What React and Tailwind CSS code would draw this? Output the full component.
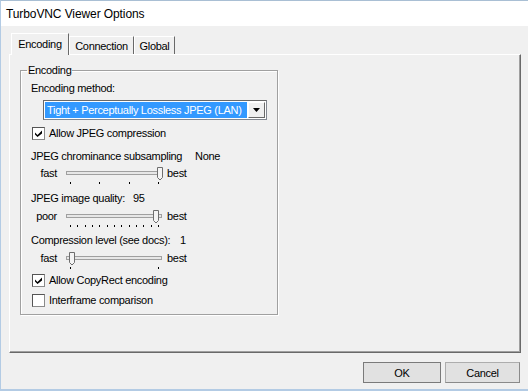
import React from 'react';

function CheckBox({ checked }) {
  return (
    <span className="w-[13px] h-[13px] shrink-0 bg-white border border-[#8a8a8a] border-t-[#555] border-l-[#555] flex items-center justify-center">
      {checked && (
        <svg width="7" height="7" viewBox="0 0 7 7">
          <polygon points="0,2.5 2.5,5 7,0.5 7,3.5 2.5,7 0,4.5" fill="#000" />
        </svg>
      )}
    </span>
  );
}

function Slider({ thumb, ticks }) {
  return (
    <svg width="104" height="20" className="block">
      <rect x="6.5" y="6.5" width="95" height="3" fill="#e7e7e7" stroke="#a0a0a0" />
      <polygon
        points={`${thumb + 0.5},2.5 ${thumb + 5.5},2.5 ${thumb + 5.5},12.5 ${thumb + 3},15 ${thumb + 0.5},12.5`}
        fill="#f4f4f4"
        stroke="#6e6e6e"
      />
      {ticks.map((t) => (
        <line key={t} x1={t + 0.5} x2={t + 0.5} y1="17" y2="19" stroke="#000" />
      ))}
    </svg>
  );
}

function SliderRow({ left, thumb, ticks, className }) {
  return (
    <div className={`flex h-[20px] ${className}`}>
      <span className="w-[36px] text-right mt-[1px]">{left}</span>
      <span className="ml-[3px]">
        <Slider thumb={thumb} ticks={ticks} />
      </span>
      <span className="ml-[3px] mt-[1px]">best</span>
    </div>
  );
}

const qualityTicks = Array.from({ length: 13 }, (_, i) => Math.round(10 + (i * 88) / 12));

export default function App() {
  return (
    <div className="w-[528px] h-[391px] overflow-hidden flex flex-col border-t border-l border-b-2 border-[#b3cbe4] border-t-[#a9bfd4] font-['Liberation_Sans',Arial,sans-serif] text-[11px] leading-[14px] tracking-[-0.3px] text-black">
      {/* Title bar */}
      <div className="h-[25px] shrink-0 bg-white flex items-center pl-[5px] text-[12px] tracking-[-0.1px]">
        TurboVNC Viewer Options
      </div>

      {/* Client area */}
      <div className="flex-1 bg-[#f0f0f0] pt-[7px] pl-[8px] pr-[7px]">
        {/* Tabs */}
        <div className="flex items-end h-[21px] pl-[2px]">
          <div className="relative z-10 w-[58px] h-[22px] -mb-[1px] bg-[#f0f0f0] border-t border-l border-white border-r border-r-[#696969] flex items-start justify-center pt-[3px]">
            Encoding
          </div>
          <div className="w-[65px] h-[18px] border-t border-l border-white border-r border-r-[#696969] flex items-center justify-center">
            Connection
          </div>
          <div className="w-[41px] h-[18px] border-t border-l border-white border-r border-r-[#696969] flex items-center justify-center">
            Global
          </div>
        </div>

        {/* Tab panel */}
        <div className="h-[299px] border border-white border-r-[#696969] border-b-[#696969] shadow-[inset_-1px_-1px_0_#a0a0a0]">
          <fieldset className="ml-[10px] mt-[8px] w-[258px] border border-[#a0a0a0] shadow-[1px_1px_0_#fff,inset_1px_1px_0_#fff] pb-[7px]">
            <legend className="ml-[6px] px-[1px]">Encoding</legend>

            <div className="mt-[4px] pl-[10px]">Encoding method:</div>

            <div className="mt-[5px] ml-[22px] w-[224px] h-[20px] bg-white border border-[#828790] border-t-[#696969] border-l-[#696969] flex p-[1px]">
              <div className="flex-1 bg-[#3399ff] text-white pl-[2px] flex items-center whitespace-nowrap overflow-hidden">
                Tight + Perceptually Lossless JPEG (LAN)
              </div>
              <div className="ml-[1px] w-[17px] bg-[#f0f0f0] border border-white border-r-[#696969] border-b-[#696969] flex items-center justify-center">
                <svg width="7" height="4" viewBox="0 0 7 4">
                  <polygon points="0,0 7,0 3.5,4" fill="#000" />
                </svg>
              </div>
            </div>

            <div className="mt-[6px] h-[14px] pl-[11px] flex items-center">
              <CheckBox checked />
              <span className="ml-[4px]">Allow JPEG compression</span>
            </div>

            <div className="mt-[9px] pl-[10px] flex whitespace-nowrap">
              <span className="w-[164px]">JPEG chrominance subsampling</span>
              <span>None</span>
            </div>
            <SliderRow className="mt-[2px]" left="fast" thumb={97} ticks={[10, 39, 69, 98]} />

            <div className="mt-[6px] pl-[10px] flex whitespace-nowrap">
              <span className="w-[102px]">JPEG image quality:</span>
              <span>95</span>
            </div>
            <SliderRow className="mt-[3px]" left="poor" thumb={93} ticks={qualityTicks} />

            <div className="mt-[5px] pl-[10px] flex whitespace-nowrap">
              <span className="w-[149px]">Compression level (see docs):</span>
              <span>1</span>
            </div>
            <SliderRow className="mt-[3px]" left="fast" thumb={9} ticks={[10, 98]} />

            <div className="mt-[3px] h-[14px] pl-[11px] flex items-center">
              <CheckBox checked />
              <span className="ml-[4px]">Allow CopyRect encoding</span>
            </div>
            <div className="mt-[6px] h-[14px] pl-[11px] flex items-center">
              <CheckBox />
              <span className="ml-[4px]">Interframe comparison</span>
            </div>
          </fieldset>
        </div>

        {/* Buttons */}
        <div className="mt-[9px] flex justify-end gap-[4px] pr-[1px]">
          <button className="w-[78px] h-[21px] bg-[#e1e1e1] border border-[#7a7a7a]">OK</button>
          <button className="w-[75px] h-[21px] bg-[#e1e1e1] border border-[#adadad] border-r-[#8a8a8a] border-b-[#8a8a8a]">
            Cancel
          </button>
        </div>
      </div>
    </div>
  );
}
